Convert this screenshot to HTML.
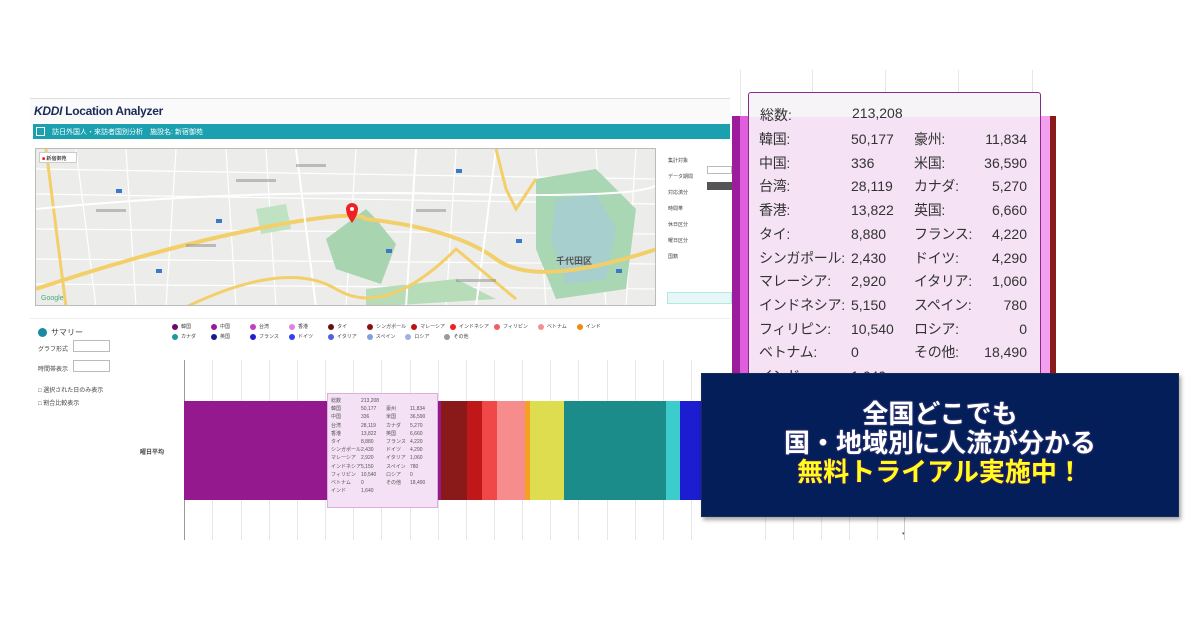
<!DOCTYPE html>
<html><head><meta charset="utf-8"><style>
*{margin:0;padding:0;box-sizing:border-box}
body{width:1200px;height:630px;background:#fff;position:relative;overflow:hidden;font-family:"Liberation Sans","Noto Sans CJK JP",sans-serif}
.a{position:absolute}
.t{font-size:6px;color:#444;white-space:nowrap}
.tt{font-size:14px;color:#333;white-space:nowrap;position:absolute}
.vl{position:absolute;width:1px;background:#e6e6e6}
.dot{display:inline-block;width:6px;height:6px;border-radius:50%;margin-right:3px;vertical-align:middle}
</style></head><body>

<div class="a" style="left:30px;top:98px;width:700px;height:1px;background:#ddd"></div>
<div class="a" style="left:30px;top:99px;width:700px;height:24px;background:#fafafa"></div>
<div class="a" style="left:34px;top:104px;font-size:12px;font-weight:bold;font-style:italic;color:#1a2a5a;letter-spacing:-0.3px">KDDI <span style="font-style:normal">Location Analyzer</span></div>
<div class="a" style="left:33px;top:124px;width:697px;height:15px;background:#1ba0b0"></div>
<div class="a" style="left:36px;top:127px;width:9px;height:9px;border:1px solid #fff"></div>
<div class="a t" style="left:52px;top:127px;color:#fff;font-size:7px">訪日外国人・来訪者国別分析　施設名: 新宿御苑</div>

<div class="a" style="left:35px;top:148px;width:621px;height:158px;background:#ececea;border:1px solid #bbb;overflow:hidden">
 <svg width="621" height="158" style="position:absolute;left:0;top:0">
  <g stroke="#fff" stroke-width="1.2" fill="none">
   <path d="M0 20 L621 30 M0 45 L621 55 M0 80 L621 85 M0 110 L621 115 M0 135 L621 140"/>
   <path d="M40 0 L60 158 M90 0 L100 158 M140 0 L130 158 M190 0 L200 158 M230 0 L240 158 M320 0 L310 158 M420 0 L410 158 M500 0 L510 158 M560 0 L570 158 M600 0 L590 158"/>
  </g>
  <path d="M290 90 L330 60 L340 70 L360 95 L345 135 L300 120 Z" fill="#a8d5b0"/>
  <path d="M330 140 L420 130 L460 150 L330 158 Z" fill="#b6dcb8"/>
  <path d="M500 30 L560 20 L600 60 L590 140 L520 150 L500 100 Z" fill="#a9d6b3"/>
  <path d="M520 50 L560 45 L580 80 L570 130 L530 135 L515 90Z" fill="#a5c8e8" opacity=".5"/>
  <path d="M220 60 L250 55 L255 80 L225 85Z" fill="#bfe2c3"/>
  <path d="M0 140 Q120 100 220 80 T330 70 Q420 80 460 110 T621 100" stroke="#f3cf6a" stroke-width="4" fill="none"/>
  <path d="M10 0 L30 158" stroke="#f3cf6a" stroke-width="3" fill="none"/>
  <path d="M0 60 Q200 40 420 45 T621 30" stroke="#fff" stroke-width="2" fill="none"/>
  <path d="M260 0 L280 158 M380 0 L370 158 M460 0 L440 158" stroke="#fff" stroke-width="2" fill="none"/>
  <path d="M150 158 Q250 110 300 140 T420 100 L480 150" stroke="#f3cf6a" stroke-width="3" fill="none"/>
  <path d="M460 0 L470 40 L480 60 L500 30" stroke="#f3cf6a" stroke-width="3" fill="none"/>
  <g fill="#3a7ac8"><rect x="80" y="40" width="6" height="4"/><rect x="180" y="70" width="6" height="4"/><rect x="350" y="100" width="6" height="4"/><rect x="420" y="20" width="6" height="4"/><rect x="120" y="120" width="6" height="4"/><rect x="480" y="90" width="6" height="4"/><rect x="580" y="120" width="6" height="4"/></g>
  <g fill="#8a8a8a" opacity=".5"><rect x="60" y="60" width="30" height="3"/><rect x="200" y="30" width="40" height="3"/><rect x="380" y="60" width="30" height="3"/><rect x="150" y="95" width="30" height="3"/><rect x="420" y="130" width="40" height="3"/><rect x="260" y="15" width="30" height="3"/></g>
  <path d="M310 60 a6 6 0 1 1 12 0 q0 6 -6 14 q-6 -8 -6 -14z" fill="#e22"/>
  <circle cx="316" cy="60" r="2" fill="#fff"/>
 </svg>
 <div class="a" style="left:3px;top:3px;width:38px;height:11px;background:#fff;border:1px solid #ccc;font-size:5px;padding:2px"><span style="color:#e00">■</span> 新宿御苑</div>
 <div class="a" style="left:520px;top:105px;font-size:9px;font-weight:bold;color:#555">千代田区</div>
 <div class="a" style="left:5px;top:146px;font-size:7px;color:#4a7">Google</div>
</div>

<div class="a t" style="left:668px;top:153px;line-height:16px;font-size:5px">集計対象<br>データ期間<br>対応済分<br>時間帯<br>休日区分<br>曜日区分<br>国籍</div>
<div class="a" style="left:707px;top:166px;width:25px;height:8px;border:1px solid #bbb"></div>
<div class="a" style="left:707px;top:182px;width:25px;height:8px;background:#555"></div>
<div class="a" style="left:667px;top:292px;width:65px;height:12px;background:#e8f6fa;border:1px solid #aed"></div>

<div class="a" style="left:30px;top:318px;width:700px;height:1px;background:#eee"></div>
<div class="a" style="left:38px;top:328px;width:9px;height:9px;border-radius:50%;background:#1a8aa0"></div>
<div class="a t" style="left:51px;top:327px;font-size:8px">サマリー</div>
<div class="a t" style="left:38px;top:344px">グラフ形式</div>
<div class="a" style="left:73px;top:340px;width:37px;height:12px;border:1px solid #bbb"></div>
<div class="a t" style="left:38px;top:364px">時間帯表示</div>
<div class="a" style="left:73px;top:360px;width:37px;height:12px;border:1px solid #bbb"></div>
<div class="a t" style="left:38px;top:385px">□ 選択された日のみ表示</div>
<div class="a t" style="left:38px;top:398px">□ 割合比較表示</div>

<div class="a t" style="left:172px;top:322px;line-height:10px;font-size:5px">
<span class="dot" style="background:#6a0a6a"></span>韓国　　　　<span class="dot" style="background:#9a1a9a"></span>中国　　　　<span class="dot" style="background:#c040c0"></span>台湾　　　　<span class="dot" style="background:#e080e0"></span>香港　　　　<span class="dot" style="background:#6a1010"></span>タイ　　　　<span class="dot" style="background:#8a1010"></span>シンガポール　<span class="dot" style="background:#c01010"></span>マレーシア　<span class="dot" style="background:#ee2020"></span>インドネシア　<span class="dot" style="background:#f06060"></span>フィリピン　　<span class="dot" style="background:#f49090"></span>ベトナム　　<span class="dot" style="background:#f08a10"></span>インド<br>
<span class="dot" style="background:#1a9a9a"></span>カナダ　　　<span class="dot" style="background:#1a1a8a"></span>英国　　　　<span class="dot" style="background:#2020d0"></span>フランス　　<span class="dot" style="background:#3040f0"></span>ドイツ　　　<span class="dot" style="background:#5060e0"></span>イタリア　　<span class="dot" style="background:#80a0e0"></span>スペイン　　<span class="dot" style="background:#a0b0e0"></span>ロシア　　　<span class="dot" style="background:#999"></span>その他</div>

<div class="vl" style="left:184px;top:360px;height:180px;background:#999"></div>
<div class="vl" style="left:212px;top:360px;height:180px"></div>
<div class="vl" style="left:241px;top:360px;height:180px"></div>
<div class="vl" style="left:269px;top:360px;height:180px"></div>
<div class="vl" style="left:297px;top:360px;height:180px"></div>
<div class="vl" style="left:325px;top:360px;height:180px"></div>
<div class="vl" style="left:353px;top:360px;height:180px"></div>
<div class="vl" style="left:381px;top:360px;height:180px"></div>
<div class="vl" style="left:410px;top:360px;height:180px"></div>
<div class="vl" style="left:438px;top:360px;height:180px"></div>
<div class="vl" style="left:466px;top:360px;height:180px"></div>
<div class="vl" style="left:494px;top:360px;height:180px"></div>
<div class="vl" style="left:522px;top:360px;height:180px"></div>
<div class="vl" style="left:550px;top:360px;height:180px"></div>
<div class="vl" style="left:578px;top:360px;height:180px"></div>
<div class="vl" style="left:607px;top:360px;height:180px"></div>
<div class="vl" style="left:635px;top:360px;height:180px"></div>
<div class="vl" style="left:663px;top:360px;height:180px"></div>
<div class="vl" style="left:691px;top:360px;height:180px"></div>
<div class="vl" style="left:765px;top:500px;height:40px"></div>
<div class="vl" style="left:793px;top:500px;height:40px"></div>
<div class="vl" style="left:821px;top:500px;height:40px"></div>
<div class="vl" style="left:849px;top:500px;height:40px"></div>
<div class="vl" style="left:877px;top:500px;height:40px"></div>
<div class="vl" style="left:904px;top:500px;height:40px;background:#ccc"></div>
<div class="a t" style="left:140px;top:447px;font-weight:bold">曜日平均</div>

<div class="a" style="left:184px;top:401px;height:99px;width:520px;display:flex">
 <div style="width:257px;background:#94198f"></div>
 <div style="width:26px;background:#8a1a1a"></div>
 <div style="width:15px;background:#c01818"></div>
 <div style="width:15px;background:#f04848"></div>
 <div style="width:28px;background:#f78c8c"></div>
 <div style="width:5px;background:#f5a020"></div>
 <div style="width:34px;background:#dedd50"></div>
 <div style="width:102px;background:#1b8c8a"></div>
 <div style="width:14px;background:#3ccccc"></div>
 <div style="width:24px;background:#1c1cd0"></div>
</div>

<div class="a" style="left:327px;top:393px;width:111px;height:115px;background:#f5e1f5;border:1px solid #d9b0d9;font-size:5px;color:#555;line-height:8.2px;padding:3px 3px">
<div style="display:grid;grid-template-columns:30px 25px 24px 24px">
<span>総数</span><span>213,208</span><span></span><span></span>
<span>韓国</span><span>50,177</span><span>豪州</span><span>11,834</span>
<span>中国</span><span>336</span><span>米国</span><span>36,590</span>
<span>台湾</span><span>28,119</span><span>カナダ</span><span>5,270</span>
<span>香港</span><span>13,822</span><span>英国</span><span>6,660</span>
<span>タイ</span><span>8,880</span><span>フランス</span><span>4,220</span>
<span>シンガポール</span><span>2,430</span><span>ドイツ</span><span>4,290</span>
<span>マレーシア</span><span>2,920</span><span>イタリア</span><span>1,060</span>
<span>インドネシア</span><span>5,150</span><span>スペイン</span><span>780</span>
<span>フィリピン</span><span>10,540</span><span>ロシア</span><span>0</span>
<span>ベトナム</span><span>0</span><span>その他</span><span>18,490</span>
<span>インド</span><span>1,640</span><span></span><span></span>
</div></div>

<div class="vl" style="left:740px;top:70px;height:46px"></div>
<div class="vl" style="left:812px;top:70px;height:22px"></div>
<div class="vl" style="left:885px;top:70px;height:22px"></div>
<div class="vl" style="left:958px;top:70px;height:22px"></div>
<div class="vl" style="left:1032px;top:70px;height:22px"></div>
<div class="a" style="left:732px;top:116px;width:8px;height:258px;background:#9c1c9c"></div>
<div class="a" style="left:740px;top:116px;width:10px;height:258px;background:#de5ede"></div>
<div class="a" style="left:1040px;top:116px;width:10px;height:258px;background:#f3a0f0"></div>
<div class="a" style="left:1050px;top:116px;width:6px;height:258px;background:#8a1a1a"></div>
<div class="a" style="left:748px;top:92px;width:293px;height:290px;border:1.5px solid #8a2a8a;border-radius:3px;background:linear-gradient(#f6f4f6 0,#f6f4f6 24px,#f5e3f5 24px);overflow:hidden">
 <div class="tt" style="left:11px;top:12px">総数:</div><div class="tt" style="left:103px;top:12px">213,208</div>
</div>
<div class="a" style="left:748px;top:92px;width:293px;height:290px;color:#333">
 <div class="tt" style="left:11px;top:36px;line-height:23.7px;letter-spacing:-0.3px">韓国:<br>中国:<br>台湾:<br>香港:<br>タイ:<br>シンガポール:<br>マレーシア:<br>インドネシア:<br>フィリピン:<br>ベトナム:<br>インド:</div>
 <div class="tt" style="left:103px;top:36px;line-height:23.7px">50,177<br>336<br>28,119<br>13,822<br>8,880<br>2,430<br>2,920<br>5,150<br>10,540<br>0<br>1,640</div>
 <div class="tt" style="left:166px;top:36px;line-height:23.7px;letter-spacing:-0.3px">豪州:<br>米国:<br>カナダ:<br>英国:<br>フランス:<br>ドイツ:<br>イタリア:<br>スペイン:<br>ロシア:<br>その他:</div>
 <div class="tt" style="right:14px;top:36px;line-height:23.7px;text-align:right">11,834<br>36,590<br>5,270<br>6,660<br>4,220<br>4,290<br>1,060<br>780<br>0<br>18,490</div>
</div>

<div class="a" style="left:701px;top:373px;width:478px;height:144px;background:#041e5a;border:1px solid #1a2a50;box-shadow:2px 3px 4px rgba(0,0,0,.35);text-align:center;font-weight:bold;font-size:26px;line-height:29px;padding-top:24px;color:#fff;font-family:'Noto Sans CJK JP',sans-serif;text-shadow:0 0 2px #6a5a90">
全国どこでも<br>国・地域別に人流が分かる<br><span style="color:#ffff1a;text-shadow:0 0 2px #8a1a6a">無料トライアル実施中！</span>
</div>
<div class="a" style="left:902px;top:531px;font-size:5px;color:#555">▾</div>
</body></html>
